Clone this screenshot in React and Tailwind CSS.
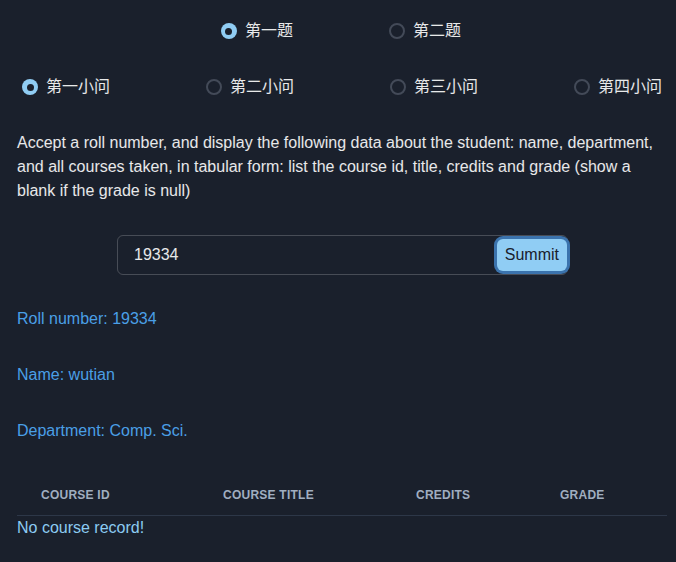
import { useState } from "react";

const questions = ["第一题", "第二题"];
const parts = ["第一小问", "第二小问", "第三小问", "第四小问"];

function Radio({ label, checked, onClick }) {
  return (
    <label onClick={onClick} className="flex items-center gap-2 cursor-pointer">
      {checked ? (
        <span className="w-4 h-4 rounded-full bg-[#90cdf4] flex items-center justify-center">
          <span className="w-[7px] h-[7px] rounded-full bg-[#1a202c]" />
        </span>
      ) : (
        <span className="w-4 h-4 rounded-full border-2 border-[#434a58]" />
      )}
      <span className="text-base leading-6 text-white/90">{label}</span>
    </label>
  );
}

export default function App() {
  const [question, setQuestion] = useState(0);
  const [part, setPart] = useState(0);
  const [roll, setRoll] = useState("19334");

  return (
    <div
      className="min-h-screen bg-[#1a202c] pl-[17px] pr-[9px] pt-[19px] pb-6 text-white/90"
      style={{ fontFamily: '"Liberation Sans", "Noto Sans CJK SC", sans-serif' }}
    >
      <div className="flex justify-center gap-[96px] pr-[2px]">
        {questions.map((q, i) => (
          <Radio key={q} label={q} checked={question === i} onClick={() => setQuestion(i)} />
        ))}
      </div>

      <div className="flex justify-between px-[5px] mt-8">
        {parts.map((p, i) => (
          <Radio key={p} label={p} checked={part === i} onClick={() => setPart(i)} />
        ))}
      </div>

      <p className="mt-8 text-base leading-6">
        Accept a roll number, and display the following data about the student: name, department,
        and all courses taken, in tabular form: list the course id, title, credits and grade (show a
        blank if the grade is null)
      </p>

      <div className="mt-8 ml-[100px] w-[451px] h-10 relative">
        <input
          value={roll}
          onChange={(e) => setRoll(e.target.value)}
          className="w-full h-10 rounded-md border border-white/20 bg-transparent pl-4 pr-20 text-base text-white/90 outline-none"
        />
        <button className="absolute right-[1px] top-1 h-8 px-2 rounded-md bg-[#90cdf4] text-[#1a202c] text-base ring-[3px] ring-[#3b73ad]">
          Summit
        </button>
      </div>

      <div className="mt-8 flex flex-col gap-8 text-base leading-6 text-[#4a9fe6]">
        <p>Roll number: {roll}</p>
        <p>Name: wutian</p>
        <p>Department: Comp. Sci.</p>
      </div>

      <div className="mt-8">
        <div className="grid grid-cols-[182px_193px_144px_131px] border-b border-[#2d3748]">
          {["Course ID", "Course Title", "Credits", "Grade"].map((h) => (
            <div key={h} className="px-6 py-3 text-xs leading-4 font-bold uppercase tracking-[0.02em] text-[#a0aec0]">
              {h}
            </div>
          ))}
        </div>
        <p className="text-base leading-6 text-[#8ccbf2]">No course record!</p>
      </div>
    </div>
  );
}
